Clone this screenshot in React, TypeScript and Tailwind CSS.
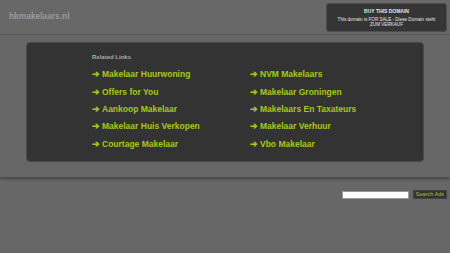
const left = ["Makelaar Huurwoning", "Offers for You", "Aankoop Makelaar", "Makelaar Huis Verkopen", "Courtage Makelaar"];
const right = ["NVM Makelaars", "Makelaar Groningen", "Makelaars En Taxateurs", "Makelaar Verhuur", "Vbo Makelaar"];

const LinkItem = ({ label }: { label: string }) => (
  <a href="#" className="flex items-center h-[17.3px] text-[8.5px] font-bold text-[#a6c81c] leading-none">
    <span className="w-[10px] text-[8.5px]">➔</span>
    {label}
  </a>
);

export default function App() {
  return (
    <div className="w-[450px] h-[253px] bg-[#676767] overflow-hidden font-['Liberation_Sans',Arial,sans-serif]">
      <div className="h-[35px] flex justify-between items-start border-b border-[#5c5c5c] bg-[#686868]">
        <div className="pl-[9px] pt-[10px] text-[8.4px] font-bold text-[#9a9a9a]">hkmakelaars.nl</div>
        <div className="mt-[3px] mr-[3px] w-[121px] h-[29px] rounded-[3px] bg-[#353535] border border-[#4e4e4e] flex flex-col items-center pt-[5px] text-[#e6e6e6] leading-[5.5px]">
          <div className="text-[5px] font-bold">BUY THIS DOMAIN</div>
          <div className="text-[4.6px] mt-[2px]">This domain is FOR SALE - Diese Domain steht</div>
          <div className="text-[4.6px]">ZUM VERKAUF</div>
        </div>
      </div>
      <div className="h-[142px] px-[26px] pt-[7px] bg-[#666666] shadow-[0_2px_3px_rgba(0,0,0,0.35)]">
        <div className="h-[120px] rounded-[4px] bg-[#333333] border border-[#4a4a4a] pl-[65px] pt-[10px]">
          <div className="text-[6px] font-bold text-[#a9a9a9] mb-[4px]">Related Links</div>
          <div className="flex">
            <div className="w-[158px] flex flex-col">
              {left.map((l) => (
                <LinkItem key={l} label={l} />
              ))}
            </div>
            <div className="flex flex-col">
              {right.map((l) => (
                <LinkItem key={l} label={l} />
              ))}
            </div>
          </div>
        </div>
      </div>
      <div className="flex justify-end items-center gap-[4px] pr-[3px] pt-[13px]">
        <div className="w-[67px] h-[8px] bg-white border border-[#999]"></div>
        <button className="h-[9px] px-[2px] bg-[#333] border border-[#444] text-[5.5px] text-[#a6c81c] leading-none">Search Ads</button>
      </div>
    </div>
  );
}
